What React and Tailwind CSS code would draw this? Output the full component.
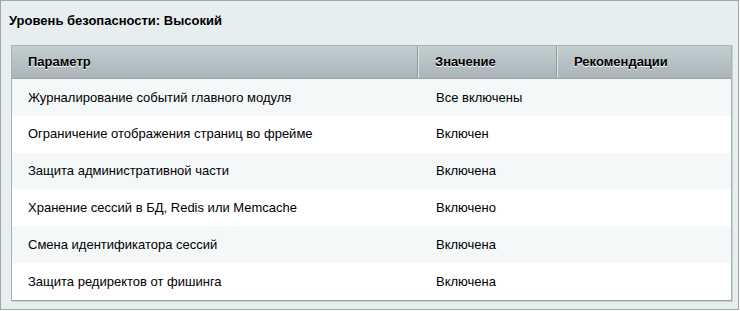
const rows = [
  ['Журналирование событий главного модуля', 'Все включены'],
  ['Ограничение отображения страниц во фрейме', 'Включен'],
  ['Защита административной части', 'Включена'],
  ['Хранение сессий в БД, Redis или Memcache', 'Включено'],
  ['Смена идентификатора сессий', 'Включена'],
  ['Защита редиректов от фишинга', 'Включена'],
];

export default function App() {
  return (
    <div className="w-[739px] h-[310px] border border-[#a4a7a8] bg-[#e7eef0] font-['Liberation_Sans',Arial,sans-serif] text-[13px] text-black">
      <div className="h-[44px] pl-[8px] pt-[10px] font-bold">Уровень безопасности: Высокий</div>
      <div className="ml-[10px] w-[721px] border border-[#a9b1b3] border-b-[#9a9fa1] bg-white shadow-[1px_1px_0_#c9d0d2]">
        <div className="flex h-[33px] bg-gradient-to-b from-[#c3ced1] to-[#a9b5b8] border-b border-[#97a2a5] font-bold [text-shadow:0_1px_0_#fff]">
          <div className="w-[406px] flex items-center pl-[16px] border-r border-r-[#8f9a9d] shadow-[1px_0_0_#dfe5e7]">Параметр</div>
          <div className="w-[139px] flex items-center pl-[17px] border-r border-r-[#8f9a9d] shadow-[1px_0_0_#dfe5e7]">Значение</div>
          <div className="flex-1 flex items-center pl-[17px]">Рекомендации</div>
        </div>
        {rows.map((r, i) => (
          <div key={i} className={`flex h-[36.8px] ${i % 2 === 0 ? 'bg-[#f4f8f9]' : 'bg-white'}`}>
            <div className="w-[407px] flex items-center pl-[16px]">{r[0]}</div>
            <div className="w-[139px] flex items-center pl-[17px]">{r[1]}</div>
            <div className="flex-1"></div>
          </div>
        ))}
      </div>
    </div>
  );
}
